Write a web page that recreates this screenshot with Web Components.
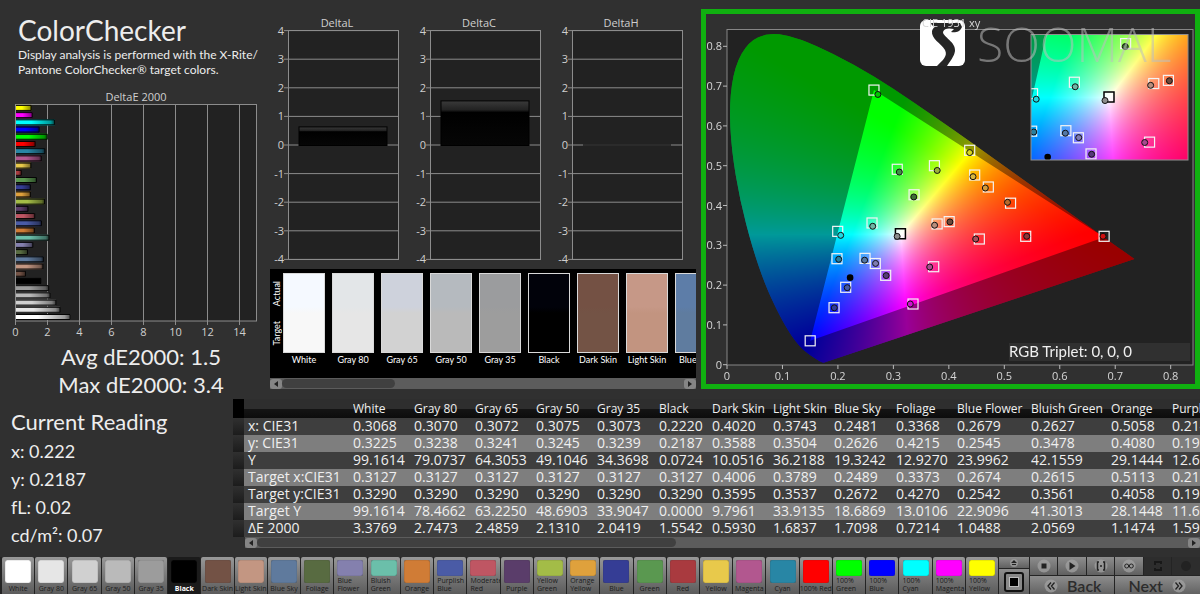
<!DOCTYPE html>
<html lang="en">
<head>
<meta charset="utf-8">
<title>ColorChecker</title>
<style>
  html { background: #303030; }
  body { margin: 0; background: #303030; color: #ededed; font-family: Lato, "Open Sans", sans-serif; }
</style>
</head>
<body>
<color-checker-app></color-checker-app>
<script>
const PATCHES = [
  ['White', '#ffffff'], ['Gray 80', '#e6e6e6'], ['Gray 65', '#d0d0d0'], ['Gray 50', '#bababa'], ['Gray 35', '#9c9c9c'],
  ['Black', '#000000'], ['Dark Skin', '#735245'], ['Light Skin', '#c39682'], ['Blue Sky', '#5f7a9d'], ['Foliage', '#586b41'],
  ['Blue Flower', '#8480ae'], ['Bluish Green', '#6bbfaa'], ['Orange', '#d07c36'], ['Purplish Blue', '#4a5ba6'],
  ['Moderate Red', '#bf5663'], ['Purple', '#5a3d6a'], ['Yellow Green', '#a3bc47'], ['Orange Yellow', '#dfa13c'],
  ['Blue', '#353d95'], ['Green', '#5a9850'], ['Red', '#a93a3f'], ['Yellow', '#e8c94b'], ['Magenta', '#b2578f'], ['Cyan', '#2886a5'],
  ['100% Red', '#ff0000'], ['100% Green', '#00ff00'], ['100% Blue', '#0000ff'], ['100% Cyan', '#00ffff'],
  ['100% Magenta', '#ff00ff'], ['100% Yellow', '#ffff00']
];
const DELTA_E = [3.38, 2.75, 2.49, 2.13, 2.04, 1.55, .59, 1.68, 1.71, .72, 1.05, 2.06, 1.15, 1.59, 1.17, .75, 1.78, .9, .9, 1.28, .33, .93, 1.58, 1.8, 1.2, 1.95, 1.45, 2.4, 1.02, .95];

class Base extends HTMLElement {
  constructor() { super(); this.attachShadow({ mode: 'open' }); }
  connectedCallback() { this.shadowRoot.innerHTML = this.render(); if (this.ready) this.ready(); }
}

customElements.define('delta-e-chart', class extends Base {
  render() {
    const x = v => 15.5 + v * 16;
    let s = '';
    for (let v = 0; v < 15; v += 2) {
      s += `<path d="M${x(v)} 14V235" stroke="#8c8c8c"/><text x="${x(v)}" y="246">${v}</text>`;
    }
    PATCHES.forEach((p, i) => {
      const y = 227 - i * 7.21, w = DELTA_E[i] * 16;
      s += `<rect x="16" y="${y - 3}" width="${w}" height="6" fill="${p[1]}"/><rect x="16" y="${y - 3}" width="${w}" height="6" fill="url(#shade)"/><path d="M16 ${y - 2.5}h${w}v5h${-w}" fill="none" stroke="#050505"/>`;
    });
    return `<style>
      :host { display: block; } svg { display: block; width: 100%; }
      text { font: 11px "Open Sans", sans-serif; fill: #cfcfcf; text-anchor: middle; }
    </style>
    <svg viewBox="0 0 270 251" role="img" aria-label="DeltaE 2000">
      <defs><linearGradient id="shade"><stop offset=".4" stop-opacity="0"/><stop offset=".9" stop-opacity=".4"/><stop offset="1" stop-opacity=".7"/></linearGradient></defs>
      <rect x="15.5" y="14.5" width="241" height="216.500" fill="#222" stroke="#8c8c8c"/>
      <text x="136" y="11">DeltaE 2000</text>${s}
    </svg>`;
  }
});

customElements.define('delta-chart', class extends Base {
  render() {
    const v = +this.getAttribute('value');
    let s = '';
    for (let i = -4; i <= 4; i++) {
      const y = 130 - i * 28.6;
      s += `<path d="M14 ${y}H128.500" stroke="#8c8c8c"/><text class="n" x="14" y="${y + 4}">${i}</text>`;
    }
    const h = Math.max(v * 28.6, 1);
    return `<style>
      :host { display: block; min-width: 0; } svg { display: block; width: 100%; }
      text { font: 11px "Open Sans", sans-serif; fill: #cfcfcf; text-anchor: middle; }
      .n { text-anchor: end; }
    </style>
    <svg viewBox="0 0 142 254" role="img" aria-label="${this.getAttribute('label')}">
      <defs><linearGradient id="g" x2="0" y2="1"><stop stop-color="#3a3a3a"/><stop offset=".2" stop-color="#222"/><stop offset=".26" stop-color="#000"/><stop offset="1" stop-color="#060606"/></linearGradient></defs>
      <rect x="18.500" y="15.500" width="110" height="229" fill="#222"/>${s}
      <rect x="18.500" y="15.500" width="110" height="229" fill="none" stroke="#8c8c8c"/>
      <rect x="29" y="${130.5 - h}" width="88" height="${h}" fill="${v ? 'url(#g)' : '#000'}" stroke="${v ? '#000' : 'none'}"/>
      <text x="67" y="12">${this.getAttribute('label')}</text>
    </svg>`;
  }
});

customElements.define('scroll-strip', class extends Base {
  render() {
    return `<style>
      :host { display: flex; height: 11px; background: #5c5c5c; align-items: center; }
      button { all: unset; width: 12px; height: 10px; background: #858585; border-radius: 3px; display: grid; place-items: center; }
      .track { flex: 1; height: 9px; }
      .thumb { height: 9px; background: #404040; border-radius: 5px; width: ${this.getAttribute('thumb')}; }
      svg { display: block; }
    </style>
    <button aria-label="Scroll left"><svg width="6" height="8"><path d="M5 1V7L1 4Z" fill="#222"/></svg></button>
    <div class="track"><div class="thumb"></div></div>
    <button aria-label="Scroll right"><svg width="6" height="8"><path d="M1 1V7L5 4Z" fill="#222"/></svg></button>`;
  }
});

customElements.define('swatch-strip', class extends Base {
  render() {
    const actual = ['#f5f9ff', '#e3e6e8', '#ced2dc', '#b5babf', '#9b9c9e', '#01020a', '#745144', '#c69887', '#5d7da8'];
    const target = ['#f8f8f8', '#e6e6e6', '#d2d2d2', '#bababa', '#9d9d9d', '#000000', '#735345', '#c29480', '#5f7c9f'];
    return `<style>
      :host { display: block; }
      .view { display: flex; background: #000; overflow: hidden; height: 109px; box-sizing: border-box; padding-top: 4px; }
      .side { flex: none; width: 13px; height: 80px; display: flex; flex-direction: column; justify-content: space-around; align-items: center; }
      .side span { writing-mode: vertical-rl; transform: rotate(180deg); font-size: 9px; line-height: 12px; color: #fff; }
      .list { display: flex; gap: 7px; }
      figure { margin: 0; width: 42px; flex: none; }
      .c { height: 80px; box-sizing: border-box; border: 1px solid #d9d9d9; }
      figcaption { font-size: 9px; line-height: 14px; color: #fff; white-space: nowrap; display: flex; justify-content: center; }
    </style>
    <div class="view"><div class="side"><span>Actual</span><span>Target</span></div>
    <div class="list">${actual.map((a, i) => `<figure><div class="c" style="background:linear-gradient(${a} 42%,${target[i]} 50%)"></div><figcaption>${PATCHES[i][0]}</figcaption></figure>`).join('')}</div></div>
    <scroll-strip thumb="28%"></scroll-strip>`;
  }
});

customElements.define('cie-diagram', class extends Base {
  render() {
    // [target x, target y, measured x, measured y, fill]
    const pts = [
      [.265, .69, .272, .679, '#00c800'], [.307, .491, .3107, .484, '#3f8f45'], [.374, .5, .379, .488, '#9bb23c'], [.3373, .427, .3368, .4215, '#3f6d35'],
      [.4376, .5387, .4376, .533, '#d8d820'], [.4466, .4766, .4436, .4724, '#d6b53f'], [.4712, .4465, .4658, .444, '#d39b3a'], [.5113, .4058, .5058, .408, '#b86a2c'],
      [.5386, .3226, .5404, .3226, '#8e3438'], [.455, .3158, .4484, .3158, '#a8505c'], [.68, .3226, .678, .3226, '#d01010'], [.4006, .3595, .402, .3588, '#6b4a3c'],
      [.3789, .3537, .3743, .3504, '#b98d7c'], [.2615, .3561, .2627, .3478, '#6fb5a5'], [.1996, .335, .205, .325, '#20d8e0'], [.1983, .2663, .2014, .2648, '#2a7f9e'],
      [.2489, .2672, .2481, .2626, '#5478a6'], [.2674, .2542, .2679, .2545, '#7f7cb4'], [.2861, .2246, .287, .2239, '#57397a'], [.214, .1945, .2168, .1935, '#4459a8'],
      [.193, .1432, .1935, .143, '#303a9a'], [.15, .06, .15, .06, 'none'], [.3354, .1525, .3305, .1525, '#d010d0'], [.3727, .2462, .3655, .2455, '#a84a90']
    ];
    const mx = x => 21 + x * 554.6, my = y => 350.7 - y * 398;
    const ix = x => 403 + (x - .3127) * 676, iy = y => 83 - (y - .329) * 545;
    const marks = (X, Y) => pts.map(p => `<rect x="${X(p[0]) - 5}" y="${Y(p[1]) - 5}" width="10" height="10" fill="none" stroke="#f4f4f4" stroke-width="1.200"/>` +
      (p[4] === 'none' ? '' : `<circle cx="${X(p[2])}" cy="${Y(p[3])}" r="3" fill="${p[4]}" stroke="#111"/>`)).join('') +
      `<rect x="${X(.3127) - 5}" y="${Y(.329) - 5}" width="10" height="10" fill="#fff" fill-opacity=".6" stroke="#000" stroke-width="1.500"/>
       <circle cx="${X(.3068)}" cy="${Y(.3225)}" r="3" fill="#8c8c8c" stroke="#111"/><circle cx="${X(.222)}" cy="${Y(.2187)}" r="3.300" fill="#000"/>`;
    let axes = '';
    for (let i = 0; i <= 8; i++) {
      const t = i ? (i / 10).toFixed(1) : '0';
      axes += `<path d="M${mx(i / 10)} 351v4M17 ${my(i / 10)}h4" stroke="#bbb"/><text x="${mx(i / 10)}" y="366" text-anchor="middle">${t}</text><text x="16" y="${my(i / 10) + 4}" text-anchor="end">${t}</text>`;
    }
    return `<style>
      :host { display: grid; border: 5px solid #10b010; background: #303030; }
      canvas, svg { grid-area: 1 / 1; display: block; width: 100%; min-width: 0; }
      text { font: 11px "Open Sans", sans-serif; fill: #d6d6d6; }
      .rgb { font: 15px Lato, sans-serif; fill: #f0f0f0; }
      .brand { font: 300 48px "Open Sans", sans-serif; fill: #bdbdbd; fill-opacity: .55; }
    </style>
    <canvas width="489" height="370"></canvas>
    <svg viewBox="0 0 489 370" role="img" aria-label="CIE 1931 xy chromaticity diagram">
      <defs><clipPath id="in"><rect x="325" y="20" width="157" height="126"/></clipPath></defs>
      <rect x="21" y="15.500" width="466" height="335.500" fill="none" stroke="#868686"/>
      ${axes}${marks(mx, my)}
      <g clip-path="url(#in)">${marks(ix, iy)}</g>
      <rect x="325" y="20.500" width="157" height="125.500" fill="none" stroke="#8f8f8f"/>
      <rect x="303" y="329" width="181" height="18" fill="#303030"/>
      <text class="rgb" x="303" y="343">RGB Triplet: 0, 0, 0</text>
      <rect x="214" y="6" width="45" height="46" rx="6" fill="#fff"/>
      <path d="M225 9H254L256 13C254 18 249 19 245 18L248 15C243 14 238 14 237 18C237 23 250 28 249 37C248 43 244 47 241 52H231C237 46 242 42 239 36C235 29 225 25 226 17Q227 13 231 12Q226 13 225 9Z" fill="#262626"/>
      <text x="216" y="13">CIE 1931 xy</text>
      <text class="brand" x="271" y="48">SOOMAL</text>
    </svg>`;
  }
  ready() {
    const W = 489, H = 370, ctx = this.shadowRoot.querySelector('canvas').getContext('2d');
    const field = (w, h, fx, fy) => {
      const c = document.createElement('canvas'); c.width = w; c.height = h;
      const g = c.getContext('2d'), im = g.createImageData(w, h);
      for (let j = 0; j < h; j++) for (let i = 0; i < w; i++) {
        const x = fx(i), y = Math.max(fy(j), .002), X = x / y, Z = (1 - x - y) / y;
        const rgb = [3.2406 * X - 1.5372 - .4986 * Z, -.9689 * X + 1.8758 + .0415 * Z, .0557 * X - .204 + 1.057 * Z].map(v => Math.max(v, 0));
        const m = Math.max(...rgb) || 1, k = (j * w + i) * 4;
        rgb.forEach((v, n) => im.data[k + n] = 255 * v / m);
        im.data[k + 3] = 255;
      }
      g.putImageData(im, 0, 0);
      return c;
    };
    const locus = [[.1741, .005], [.1714, .0051], [.1644, .0109], [.1566, .0177], [.144, .0297], [.1355, .0399], [.1241, .0578], [.1096, .0868], [.0913, .1327], [.0687, .2007], [.0454, .295], [.0235, .4127], [.0082, .5384], [.0039, .6548], [.0139, .7502], [.0389, .812], [.0743, .8338], [.1142, .8262], [.1547, .8059], [.2296, .7543], [.3016, .6923], [.3731, .6245], [.4441, .5547], [.5125, .4866], [.5752, .4242], [.627, .3725], [.6658, .334], [.6915, .3083], [.7347, .2653]];
    const draw = (X, Y, img, x0, y0, w, h) => {
      ctx.save();
      ctx.beginPath(); ctx.rect(x0, y0, w, h); ctx.clip();
      const p = locus.map(([a, b]) => [X(a), Y(b)]);
      const path = new Path2D();
      path.moveTo(...p[0]);
      for (let i = 1; i < p.length - 1; i++) path.quadraticCurveTo(...p[i], (p[i][0] + p[i + 1][0]) / 2, (p[i][1] + p[i + 1][1]) / 2);
      path.lineTo(...p[p.length - 1]); path.closePath();
      ctx.clip(path);
      ctx.drawImage(img, x0, y0);
      const dim = new Path2D();
      dim.rect(0, 0, W, H);
      dim.moveTo(X(.265), Y(.69)); dim.lineTo(X(.68), Y(.32)); dim.lineTo(X(.15), Y(.06)); dim.closePath();
      ctx.fillStyle = 'rgba(0,0,0,.4)'; ctx.fill(dim, 'evenodd');
      ctx.restore();
    };
    ctx.fillStyle = '#222'; ctx.fillRect(21, 15, 466, 336);
    draw(x => 21 + x * 554.6, y => 350.7 - y * 398, field(466, 336, i => i / 554.6, j => (335.7 - j) / 398), 21, 15, 466, 336);
    draw(x => 403 + (x - .3127) * 676, y => 83 - (y - .329) * 545, field(157, 126, i => .3127 + (i - 78) / 676, j => .329 + (63 - j) / 545), 325, 20, 157, 126);
  }
});

customElements.define('current-reading', class extends Base {
  render() {
    return `<style>
      :host { display: block; padding: 8px 0 0 11px; white-space: nowrap; }
      h2 { margin: 0; font-size: 22px; line-height: 30px; font-weight: 400; }
      p { margin: 0; font-size: 18px; line-height: 28px; }
    </style><h2>Current Reading</h2><p>x: 0.222</p><p>y: 0.2187</p><p>fL: 0.02</p><p>cd/m²: 0.07</p>`;
  }
});

customElements.define('data-grid', class extends Base {
  render() {
    const widths = [109, 61, 61, 61, 61, 62, 53, 61, 61, 62, 61, 74, 80, 61, 61];
    const rows = `x: CIE31|0.3068|0.3070|0.3072|0.3075|0.3073|0.2220|0.4020|0.3743|0.2481|0.3368|0.2679|0.2627|0.5058|0.2143
y: CIE31|0.3225|0.3238|0.3241|0.3245|0.3239|0.2187|0.3588|0.3504|0.2626|0.4215|0.2545|0.3478|0.4080|0.1935
Y|99.1614|79.0737|64.3053|49.1046|34.3698|0.0724|10.0516|36.2188|19.3242|12.9270|23.9962|42.1559|29.1444|12.6031
Target x:CIE31|0.3127|0.3127|0.3127|0.3127|0.3127|0.3127|0.4006|0.3789|0.2489|0.3373|0.2674|0.2615|0.5113|0.2118
Target y:CIE31|0.3290|0.3290|0.3290|0.3290|0.3290|0.3290|0.3595|0.3537|0.2672|0.4270|0.2542|0.3561|0.4058|0.1933
Target Y|99.1614|78.4662|63.2250|48.6903|33.9047|0.0000|9.7961|33.9135|18.6869|13.0106|22.9096|41.3013|28.1448|11.6042
ΔE 2000|3.3769|2.7473|2.4859|2.1310|2.0419|1.5542|0.5930|1.6837|1.7098|0.7214|1.0488|2.0569|1.1474|1.5924`.split('\n').map(r => r.split('|'));
    return `<style>
      :host { display: block; min-width: 0; overflow: hidden; font-family: "Open Sans", sans-serif; }
      .view { overflow: hidden; }
      table { border-collapse: collapse; table-layout: fixed; color: #efefef; white-space: nowrap; }
      th, td { padding: 0; font-weight: 400; text-align: left; height: 17px; line-height: 17px; overflow: hidden; }
      tbody td, tbody th { font-size: 14px; height: 15px; line-height: 15px; padding-bottom: 2px; }
      tbody th { padding-left: 4px; }
      thead th { font-size: 12px; height: 18px; line-height: 18px; padding-top: 1px; background: linear-gradient(#2e2e2e 50%, #141414 55%, #0c0c0c); }
      thead td { background: #000; }
      tbody tr { background: #3e3e3e; }
      tbody tr:nth-child(even) { background: #7e7e7e; }
      tbody td:first-child { background: linear-gradient(#303030, #1c1c1c); }
      scroll-strip { margin-left: 12px; }
    </style>
    <div class="view"><table style="width:${11 + widths.reduce((a, b) => a + b)}px">
      <colgroup><col style="width:11px">${widths.map(w => `<col style="width:${w}px">`).join('')}</colgroup>
      <thead><tr><td></td><th></th>${PATCHES.slice(0, 14).map((p, i) => `<th scope="col">${i === 13 ? 'Purplish Blue' : p[0]}</th>`).join('')}</tr></thead>
      <tbody>${rows.map(r => `<tr><td></td><th scope="row">${r[0]}</th>${r.slice(1).map(c => `<td>${c}</td>`).join('')}</tr>`).join('')}</tbody>
    </table></div>
    <scroll-strip thumb="45%"></scroll-strip>`;
  }
});

customElements.define('patch-button', class extends Base {
  render() {
    const label = this.getAttribute('label'), two = /^(Blue F|Bluish|Purplish|Moderate|Yellow G|Orange Y|100% [^R])/.test(label);
    return `<style>
      :host { display: block; min-width: 0; }
      button { width: 100%; height: 38px; box-sizing: border-box; border: 0; border-radius: 2px 2px 0 0; padding: 3px 0 0; font: 7px "Open Sans", sans-serif; line-height: 8px; color: #1c1c1c;
        display: flex; flex-direction: column; align-items: center; justify-content: space-between; background: linear-gradient(#989898, #858585 30%, #5a5a5a); overflow: hidden; }
      :host([selected]) button { background: #1b1b1b; color: #fff; font-weight: 700; }
      i { display: block; width: 26px; height: ${two ? 16 : 23}px; border-radius: 2px; box-shadow: inset 0 0 1px #333; background: ${this.getAttribute('color')}; }
      span { width: ${two ? '26px' : 'auto'}; white-space: ${two ? 'normal' : 'nowrap'}; text-align: left; padding-bottom: 2px; }
    </style><button><i></i><span>${label}</span></button>`;
  }
});

customElements.define('transport-controls', class extends Base {
  render() {
    const ic = (d) => `<svg width="16" height="16" viewBox="0 0 16 16"><circle cx="8" cy="8" r="6.500" fill="#a2a2a2" fill-opacity=".75"/>${d}</svg>`;
    return `<style>
      :host { display: grid; grid-template-columns: 30fr 171fr; gap: 1px; }
      button { border: 0; padding: 0; margin: 0; min-width: 0; display: flex; align-items: center; justify-content: center; background: linear-gradient(#8d8d8d, #606060); color: #2c2c2c; }
      svg { display: block; flex: none; }
      .left { display: grid; grid-template-rows: 11px 26px; gap: 1px; }
      .right { display: grid; grid-template-rows: 18px 19px; gap: 1px; }
      .top { display: grid; grid-template-columns: repeat(6, 1fr); gap: 1px; }
      .nav { display: grid; grid-template-columns: 1fr 1fr; gap: 1px; }
      .nav button { font: 600 16px Lato, sans-serif; line-height: 19px; gap: 8px; }
      button:disabled { background: #333; opacity: .6; }
    </style>
    <div class="left"><button aria-label="Expand"><svg width="12" height="8" viewBox="0 0 12 8"><circle cx="6" cy="4" r="4" fill="#a2a2a2" fill-opacity=".7"/><path d="M3 4L6 1L9 4ZM4 5H8V6H4Z" fill="#222"/></svg></button>
      <button aria-label="Patch window"><svg width="20" height="22" viewBox="0 0 20 22"><rect x="1" y="2" width="18" height="18" rx="2" fill="#888" stroke="#111" stroke-width="2"/><rect x="5.500" y="6.500" width="9" height="9" fill="#000" stroke="#bbb"/></svg></button></div>
    <div class="right"><div class="top">
      <button aria-label="Stop">${ic('<path d="M5.500 5.500h5v5h-5z" fill="#222"/>')}</button>
      <button aria-label="Play">${ic('<path d="M5.500 4V12L11.500 8Z" fill="#222"/>')}</button>
      <button aria-label="Step">${ic('<path d="M6 4H4.500V12H6M10 4H11.500V12H10M7 8H9" fill="none" stroke="#222" stroke-width="1.500"/>')}</button>
      <button aria-label="Loop">${ic('<circle cx="5.700" cy="8" r="2" fill="none" stroke="#222"/><circle cx="10.300" cy="8" r="2" fill="none" stroke="#222"/>')}</button>
      <button disabled aria-label="Refresh"><svg width="16" height="16" viewBox="0 0 16 16"><path d="M5 7V4H11V6M11 9V12H5V10" fill="none" stroke="#111" stroke-width="2"/></svg></button>
      <button disabled aria-label="Record"><svg width="16" height="16" viewBox="0 0 16 16"><circle cx="8" cy="8" r="5" fill="#222"/></svg></button>
    </div><div class="nav">
      <button>${ic('<path d="M8 4.500L5 8L8 11.500M11.500 4.500L8.500 8L11.500 11.500" fill="none" stroke="#222" stroke-width="1.300"/>')}Back</button>
      <button>Next${ic('<path d="M4.500 4.500L7.500 8L4.500 11.500M8 4.500L11 8L8 11.500" fill="none" stroke="#222" stroke-width="1.300"/>')}</button>
    </div></div>`;
  }
});

customElements.define('intro-panel', class extends Base {
  render() {
    return `<style>
      :host { display: block; padding-top: 14px; min-width: 0; }
      h1 { margin: 0 0 0 18px; font-size: 28px; line-height: 33px; font-weight: 400; }
      p { margin: 0 0 13px 18px; font-size: 12px; line-height: 15px; white-space: nowrap; }
      .sum { padding: 2px 0 0 12px; font-size: 22px; line-height: 28px; text-align: center; }
    </style><h1>ColorChecker</h1><p>Display analysis is performed with the X-Rite/<br>Pantone ColorChecker® target colors.</p>
    <delta-e-chart></delta-e-chart><div class="sum">Avg dE2000: 1.5<br>Max dE2000: 3.4</div>`;
  }
});

customElements.define('color-checker-app', class extends Base {
  render() {
    return `<style>
      :host { display: block; overflow: hidden; }
      .top { display: grid; grid-template-columns: 270fr 431fr 499fr; }
      .mid { padding: 15px 5px 0 0; min-width: 0; }
      .deltas { display: grid; grid-template-columns: repeat(3, 1fr); }
      cie-diagram { margin-top: 9px; align-self: start; min-width: 0; }
      .bottom { display: grid; grid-template-columns: 233fr 967fr; }
      .bar { display: grid; grid-template-columns: 999fr 201fr; gap: 1px; margin-top: 8px; background: #242424; }
      .patches { display: grid; grid-template-columns: repeat(30, 1fr); gap: 1px; padding-left: 2px; }
    </style>
    <div class="top"><intro-panel></intro-panel>
      <div class="mid"><div class="deltas"><delta-chart label="DeltaL" value="0.65"></delta-chart><delta-chart label="DeltaC" value="1.56"></delta-chart><delta-chart label="DeltaH" value="0"></delta-chart></div>
      <swatch-strip></swatch-strip></div>
      <cie-diagram></cie-diagram></div>
    <div class="bottom"><current-reading></current-reading><data-grid></data-grid></div>
    <div class="bar"><div class="patches">${PATCHES.map(p => `<patch-button label="${p[0]}" color="${p[1]}"${p[0] === 'Black' ? ' selected' : ''}></patch-button>`).join('')}</div>
      <transport-controls></transport-controls></div>`;
  }
});
</script>
</body>
</html>
